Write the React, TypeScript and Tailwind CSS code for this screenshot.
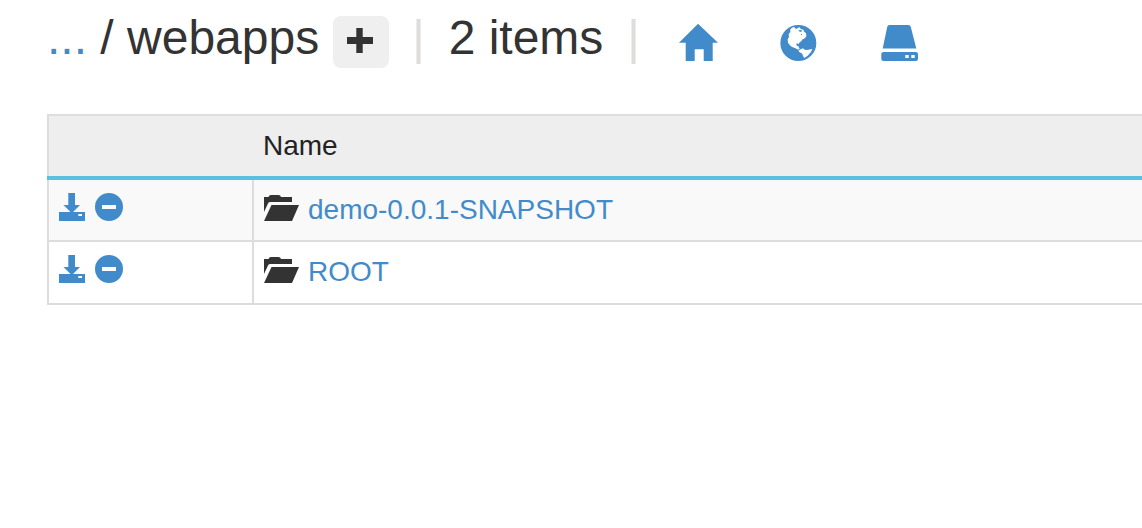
import type { ReactNode } from "react";

function Icon({ viewBox, className, children }: { viewBox: string; className: string; children: ReactNode }) {
  return (
    <svg viewBox={viewBox} className={className} fill="currentColor" fillRule="evenodd" aria-hidden="true">
      {children}
    </svg>
  );
}

const HomeIcon = () => (
  <Icon viewBox="0 0 40 40" className="block size-10">
    <path d="M20.3 3 40 21.7H34.7V40H25.7V28.3H16.7V40H7.7V21.7H1L19.6 3.2Q20 2.8 20.3 3Z" />
  </Icon>
);

const GlobeIcon = () => (
  <Icon viewBox="26 18 120 120" className="block size-10">
    <path d="M84 30a54 54 0 1 0 0 108a54 54 0 1 0 0-108ZM60 43 65 38 72 35 73 39 78 42 83 38 88 37 91 42 99 44 102 51 107 54 108 63 104 70 97 73 93 79 88 82 85 87 80 85 78 88 78 91 84 94 88 101 84 104 78 101 72 98 65 96 58 90 53 83 52 73 56 66 55 57 60 51ZM84 107 91 103 98 100 103 104 110 105 126 102 122 111 112 122 102 129 98 123 96 116 88 112Z" />
    <path d="M84 46 93 45 95 49 89 51ZM92 57 95 57 95 60 92 60Z" />
  </Icon>
);

const DriveIcon = () => (
  <Icon viewBox="0 0 40 40" className="block size-10">
    <path d="M9.5 4H28.3Q30.3 4 30.8 6L36.3 27.5H2.7L7.2 6Q7.7 4 9.5 4Z" />
    <path d="M3.5 31H35.8Q38 31 38 33V38Q38 40 35.8 40H3.5Q1.3 40 1.3 38V33Q1.3 31 3.5 31ZM25.3 34V37H28.7V34ZM31.3 34V37H34.7V34Z" />
  </Icon>
);

const PlusIcon = () => (
  <Icon viewBox="1 2 28 28" className="block size-7">
    <path d="M10.3 2H16.7V11H27V18H16.7V27H10.3V18H1V11H10.3Z" />
  </Icon>
);

const SaveIcon = () => (
  <Icon viewBox="0 0 28 28" className="block size-7">
    <path d="M9.3 0H16V12H21L14 19H26V28H0V19H11.5L4.5 12H9.3ZM19.3 21V23H23V21Z" />
  </Icon>
);

const MinusIcon = () => (
  <Icon viewBox="0 0 28 28" className="block size-7">
    <path d="M14 0a14 14 0 1 0 0 28a14 14 0 1 0 0-28ZM7 12V16H21V12Z" />
  </Icon>
);

const FolderIcon = () => (
  <Icon viewBox="0 0 36 28" className="block h-7 w-9 overflow-visible">
    <path d="M0 1H4.5Q5-1 7-1H14.5Q16.5-1 17 1H28V6H5.8Q4.5 6 4 7.5L0 16Z" />
    <path d="M7.5 9H35L28 25H0Z" />
  </Icon>
);

const Divider = () => (
  <span className="text-[#ddd]" aria-hidden="true">|</span>
);

const folders = ["demo-0.0.1-SNAPSHOT", "ROOT"];

export default function App() {
  return (
    <main className="min-h-screen overflow-x-hidden bg-white pt-3 pl-[47px] font-['Liberation_Sans',Arial,sans-serif] text-[28px] leading-10 text-[#333]">
      <header className="flex h-14 items-center gap-6 whitespace-nowrap text-5xl">
        <div className="-mr-px flex items-center gap-3.5">
          <h1 className="-mt-1 font-normal">
            <a href="#parent" className="text-[#428bca]">...</a> / webapps
          </h1>
          <button type="button" aria-label="Add" className="mt-1 flex h-[52px] w-14 items-center justify-center rounded-lg bg-[#efefef]">
            <PlusIcon />
          </button>
        </div>
        <div className="-mt-1 flex gap-6">
          <Divider />
          <span>2 items</span>
          <Divider />
        </div>
        <nav className="mt-0.5 ml-3.5 flex items-center gap-[61px] text-[#428bca]">
          <a href="#home" aria-label="Home"><HomeIcon /></a>
          <a href="#web" aria-label="Web"><GlobeIcon /></a>
          <a href="#drive" aria-label="Drive"><DriveIcon /></a>
        </nav>
      </header>

      <table className="mt-[46px] w-full table-fixed border-collapse border-2 border-r-0 border-[#ddd] text-left">
        <colgroup>
          <col className="w-[205px]" />
          <col />
        </colgroup>
        <thead>
          <tr className="h-[63px] border-b-4 border-[#5bc0de] bg-[#eee] align-top text-[#222]">
            <td />
            <th scope="col" className="p-2.5 font-normal">Name</th>
          </tr>
        </thead>
        <tbody>
          {folders.map((name) => (
            <tr key={name} className="h-[63px] border-b-2 border-[#ddd] align-top odd:bg-[#f9f9f9]">
              <td className="border-r-2 border-[#ddd] p-2.5">
                <div className="flex gap-2 pt-[3px] text-[#428bca]">
                  <a href="#download" aria-label={`Download ${name}`}><SaveIcon /></a>
                  <button type="button" aria-label={`Remove ${name}`}><MinusIcon /></button>
                </div>
              </td>
              <td className="p-2.5">
                <div className="flex items-center gap-2">
                  <FolderIcon />
                  <a href="#folder" className="text-[#428bca]">{name}</a>
                </div>
              </td>
            </tr>
          ))}
        </tbody>
      </table>
    </main>
  );
}
